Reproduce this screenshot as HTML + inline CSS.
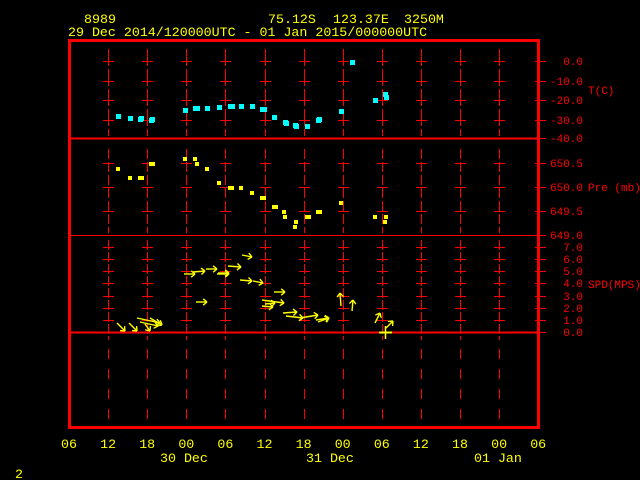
<!DOCTYPE html>
<html><head><meta charset="utf-8"><style>
html,body{margin:0;padding:0;background:#000;width:640px;height:480px;overflow:hidden}
svg{position:absolute;left:0;top:0}
text{font-family:"Liberation Mono","DejaVu Sans Mono",monospace}
</style></head><body>
<svg id="s" width="640" height="480" xmlns="http://www.w3.org/2000/svg">
<g fill="#ffff00" font-size="13.3">
<text x="84" y="23">8989</text>
<text x="268" y="23">75.12S</text>
<text x="333" y="23">123.37E</text>
<text x="404" y="23">3250M</text>
<text x="68" y="36">29 Dec 2014/120000UTC - 01 Jan 2015/000000UTC</text>
<text x="160" y="462">30 Dec</text>
<text x="306" y="462">31 Dec</text>
<text x="474" y="462">01 Jan</text>
<text x="15" y="478">2</text>
</g>
<g fill="#ff0000" font-size="11" text-anchor="end" id="rl"></g>
<g fill="#ff0000" font-size="11">
<text x="588" y="94">T(C)</text>
<text x="588" y="191">Pre (mb)</text>
<text x="588" y="288">SPD(MPS)</text>
</g>
<g fill="#ffff00" font-size="13.3" text-anchor="middle" id="hl"></g>
<g id="g" shape-rendering="crispEdges"></g>
<g id="ar"></g>
</svg>
<script>
var NS="http://www.w3.org/2000/svg",g=document.getElementById('g'),ar=document.getElementById('ar');
function el(t,a,p){var e=document.createElementNS(NS,t);for(var k in a)e.setAttribute(k,a[k]);(p||g).appendChild(e);return e;}
function L(x1,y1,x2,y2,c,w,d,p){var a={x1:x1,y1:y1,x2:x2,y2:y2,stroke:c||'#f00','stroke-width':w||1};if(d)a['stroke-dasharray']=d;el('line',a,p);}
var R='#ff0000',cols=[];for(var i=1;i<12;i++)cols.push(Math.round(69+39.1*i));
var hrs=['06','12','18','00','06','12','18','00','06','12','18','00','06'];
for(var i=0;i<13;i++){var t=el('text',{x:69+39.1*i,y:448},document.getElementById('hl'));t.textContent=hrs[i];}
var tRows=[61,81,100,120],pRows=[163,187,211],sRows=[];for(var i=1;i<=7;i++)sRows.push(Math.round(332-12.14*i));
cols.forEach(function(x){
 L(x+.5,49,x+.5,136,R,1,"17 3");
 L(x+.5,149,x+.5,233,R,1,"10 3");
 L(x+.5,240,x+.5,340,R,1,"10 2");
 L(x+.5,349,x+.5,420,R,1,"10 10");
 tRows.concat(pRows,sRows).forEach(function(y){L(x-5,y+.5,x+6,y+.5);});
});
var rl=document.getElementById('rl');
function lab(y,s){y=Math.round(y);L(535,y+.5,546,y+.5);var t=el('text',{x:583,y:y+4},rl);t.textContent=s;}
lab(61,'0.0');lab(81,'-10.0');lab(100,'-20.0');lab(120,'-30.0');lab(138,'-40.0');
lab(163,'650.5');lab(187,'650.0');lab(211,'649.5');lab(235,'649.0');
for(var i=0;i<=7;i++)lab(332-12.14*i,i+'.0');
L(69,138.5,539,138.5,R,2);L(69,235.5,539,235.5,R,1);L(69,332.5,539,332.5,R,2);
el('rect',{x:69.5,y:40.5,width:469,height:387,fill:'none',stroke:R,'stroke-width':3});
[[118,116],[130,118],[140,119],[141,118],[151,120],[152,119],[185,110],[195,108],[197,108],[207,108],[219,107],[230,106],[232,106],[241,106],[252,106],[262,109],[264,109],[274,117],[285,122],[286,123],[295,125],[296,126],[307,126],[318,120],[319,119],[341,111],[352,62],[375,100],[385,94],[386,97]].forEach(function(p){el('rect',{x:p[0]-2,y:p[1]-2,width:5,height:5,fill:'#00ffff'});});
[[118,169],[130,178],[140,178],[142,178],[151,164],[153,164],[185,159],[195,159],[197,164],[207,169],[219,183],[230,188],[232,188],[241,188],[252,193],[262,198],[264,198],[274,207],[276,207],[284,212],[285,217],[296,222],[295,227],[307,217],[309,217],[318,212],[320,212],[341,203],[375,217],[386,217],[385,222]].forEach(function(p){el('rect',{x:p[0]-2,y:p[1]-2,width:4,height:4,fill:'#ffff00'});});
var Y='#ffff00';
function A(x1,y1,x2,y2){L(x1,y1,x2,y2,Y,1.4,null,ar);var a=Math.atan2(y2-y1,x2-x1),h=5;
 [0.7,-0.7].forEach(function(d){L(x2,y2,x2-h*Math.cos(a+d),y2-h*Math.sin(a+d),Y,1.4,null,ar);});}
[[117,323,125,331],[129,323,137,331],[137,318,160,323],[140,322,158,326],[145,324,150,331],[150,318,162,325],
[184,274,195,274],[193,272,205,271],[206,269,217,269],[217,274,229,274],[218,273,229,273],[228,266,241,267],[242,255,252,257],
[240,280,252,281],[253,281,263,283],[196,302,207,302],[274,292,285,292],[262,300,284,303],[262,306,273,307],[265,304,275,303],
[283,313,297,312],[286,316,303,318],[300,318,318,315],[316,320,329,318],[318,322,329,318],
[341,306,340,293],[352,311,353,300],[375,323,380,313],[386,328,393,321]].forEach(function(a){A(a[0],a[1],a[2],a[3]);});
L(379,332.5,392,332.5,Y,2,null,ar);L(385.5,326,385.5,339,Y,1.5,null,ar);
</script>
</body></html>
